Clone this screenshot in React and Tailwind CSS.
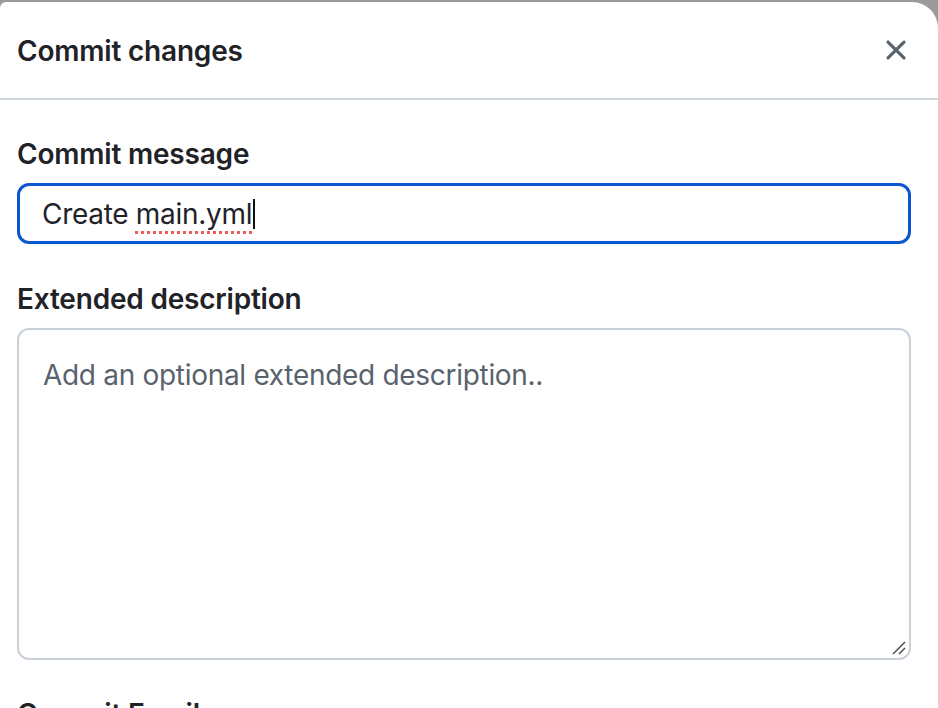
import React from 'react';

const font = { fontFamily: 'Inter, "Noto Sans", "Liberation Sans", sans-serif' };

const CloseIcon = () => (
    <svg width="34" height="34" viewBox="0 0 16 16" fill="#59636e">
        <path d="M3.72 3.72a.75.75 0 0 1 1.06 0L8 6.94l3.22-3.22a.749.749 0 0 1 1.275.326.749.749 0 0 1-.215.734L9.06 8l3.22 3.22a.749.749 0 0 1-.326 1.275.749.749 0 0 1-.734-.215L8 9.06l-3.22 3.22a.751.751 0 0 1-1.042-.018.751.751 0 0 1-.018-1.042L6.94 8 3.72 4.78a.75.75 0 0 1 0-1.06Z" />
    </svg>
);

const ResizeHandle = () => (
    <svg width="16" height="16" viewBox="0 0 16 16" className="absolute right-[2px] bottom-[2px]">
        <line x1="2" y1="14" x2="14" y2="2" stroke="#555" strokeWidth="1.6" />
        <line x1="8" y1="14" x2="14" y2="8" stroke="#555" strokeWidth="1.6" />
    </svg>
);

export default function App() {
    return (
        <div className="w-[938px] h-[708px] overflow-hidden bg-[#9a9a9a] pt-[2px]" style={font}>
            <div className="h-[800px] bg-white rounded-tr-[26px] rounded-tl-[6px] text-[#1f2328]">
                {/* header */}
                <div className="h-[98px] flex items-center justify-between pl-[17px] pr-[25px] border-b-2 border-[#d1d9e0]">
                    <h1 className="text-[28px] font-semibold tracking-[-0.2px] mt-[1px]">Commit changes</h1>
                    <CloseIcon />
                </div>

                <div className="px-[17px] pr-[27px]">
                    {/* commit message */}
                    <div className="pt-[36px] text-[28px] font-semibold leading-[36px] tracking-[-0.2px]">Commit message</div>
                    <div className="mt-[11px] h-[61px] rounded-[12px] border-[3px] border-[#0b57d0] flex items-center pl-[22px]">
                        <span className="text-[28px] leading-[34px] tracking-[-0.3px]">
                            Create{' '}
                            <span className="underline decoration-dotted decoration-[#f05a5a] decoration-[3px] underline-offset-[7px]">main.yml</span>
                        </span>
                        <span className="w-[2px] h-[30px] bg-[#111] ml-[1px]"></span>
                    </div>

                    {/* extended description */}
                    <div className="mt-[37px] text-[28px] font-semibold leading-[36px] tracking-[-0.2px]">Extended description</div>
                    <div className="relative mt-[11px] h-[332px] rounded-[12px] border-2 border-[#c8d1da] pl-[24px] pt-[27px]">
                        <span className="text-[28px] leading-[36px] text-[#59636e] tracking-[-0.3px]">Add an optional extended description..</span>
                        <ResizeHandle />
                    </div>

                    {/* commit email (cut off) */}
                    <div className="mt-[36px] text-[28px] font-semibold leading-[36px] tracking-[-0.2px]">Commit Email</div>
                </div>
            </div>
        </div>
    );
}
